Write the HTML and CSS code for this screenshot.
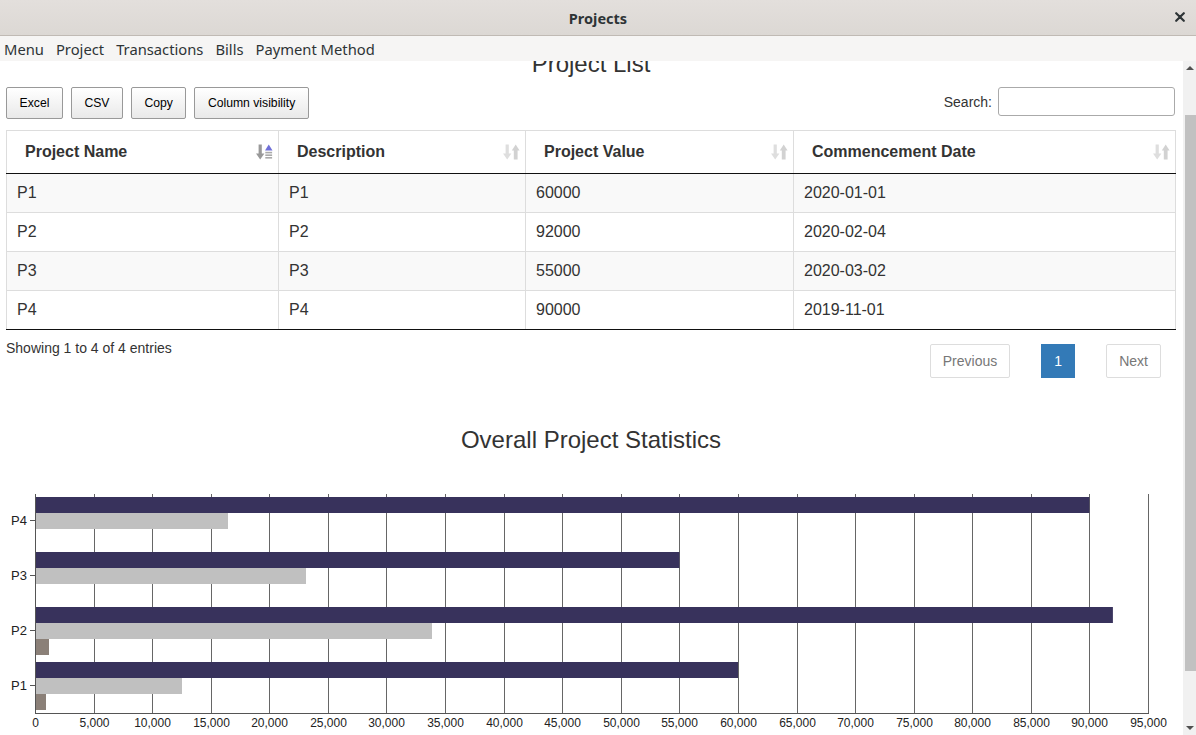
FILE: index.html
```html
<!DOCTYPE html>
<html>
<head>
<meta charset="utf-8">
<title>Projects</title>
<link rel="stylesheet" href="styles.css">
</head>
<body>
<div class="titlebar">
  <span class="title">Projects</span>
  <svg class="close" width="10" height="10" viewBox="0 0 10 10"><path d="M1.2 1.2 L8.8 8.8 M8.8 1.2 L1.2 8.8" stroke="#2e3436" stroke-width="2.2" stroke-linecap="round"/></svg>
</div>
<div class="menubar">
  <span>Menu</span><span>Project</span><span>Transactions</span><span>Bills</span><span>Payment Method</span>
</div>
<div class="content">
  <div class="main">
    <h2 class="heading">Project List</h2>
    <div class="toolbar">
      <div class="buttons">
        <button class="btn">Excel</button>
        <button class="btn">CSV</button>
        <button class="btn">Copy</button>
        <button class="btn">Column visibility</button>
      </div>
      <label class="search">Search: <input type="text" class="search-input"></label>
    </div>
    <table class="grid">
      <colgroup><col class="c1"><col class="c2"><col class="c3"><col class="c4"></colgroup>
      <thead>
        <tr>
          <th><div class="th-inner"><span>Project Name</span>
            <svg class="sort" width="19" height="18" viewBox="0 0 19 18"><rect x="3.6" y="1.5" width="3.2" height="10" fill="#999"/><polygon points="1,10.5 9.4,10.5 5.2,16.5" fill="#999"/><polygon points="10,7.5 17.5,7.5 13.75,1.5" fill="#6f6fd8"/><rect x="10.3" y="8.8" width="6.8" height="1.6" fill="#aaa"/><rect x="10.3" y="11.4" width="6.8" height="1.6" fill="#aaa"/><rect x="10.3" y="14" width="6.8" height="1.6" fill="#aaa"/></svg></div></th>
          <th><div class="th-inner"><span>Description</span>
            <svg class="sort" width="19" height="18" viewBox="0 0 19 18"><rect x="3.6" y="1.5" width="3.2" height="10" fill="#dedede"/><polygon points="1,10.5 9.4,10.5 5.2,16.5" fill="#dedede"/><polygon points="9.8,7.5 17.6,7.5 13.7,1.5" fill="#d2d2d2"/><rect x="11.8" y="6.5" width="3.8" height="10" fill="#d2d2d2"/></svg></div></th>
          <th><div class="th-inner"><span>Project Value</span>
            <svg class="sort" width="19" height="18" viewBox="0 0 19 18"><rect x="3.6" y="1.5" width="3.2" height="10" fill="#dedede"/><polygon points="1,10.5 9.4,10.5 5.2,16.5" fill="#dedede"/><polygon points="9.8,7.5 17.6,7.5 13.7,1.5" fill="#d2d2d2"/><rect x="11.8" y="6.5" width="3.8" height="10" fill="#d2d2d2"/></svg></div></th>
          <th><div class="th-inner"><span>Commencement Date</span>
            <svg class="sort" width="19" height="18" viewBox="0 0 19 18"><rect x="3.6" y="1.5" width="3.2" height="10" fill="#dedede"/><polygon points="1,10.5 9.4,10.5 5.2,16.5" fill="#dedede"/><polygon points="9.8,7.5 17.6,7.5 13.7,1.5" fill="#d2d2d2"/><rect x="11.8" y="6.5" width="3.8" height="10" fill="#d2d2d2"/></svg></div></th>
        </tr>
      </thead>
      <tbody>
        <tr class="odd"><td>P1</td><td>P1</td><td>60000</td><td>2020-01-01</td></tr>
        <tr><td>P2</td><td>P2</td><td>92000</td><td>2020-02-04</td></tr>
        <tr class="odd"><td>P3</td><td>P3</td><td>55000</td><td>2020-03-02</td></tr>
        <tr><td>P4</td><td>P4</td><td>90000</td><td>2019-11-01</td></tr>
      </tbody>
    </table>
    <div class="footer">
      <div class="info">Showing 1 to 4 of 4 entries</div>
      <div class="pager">
        <span class="pg disabled">Previous</span>
        <span class="pg current">1</span>
        <span class="pg disabled">Next</span>
      </div>
    </div>
    <h2 class="chart-title">Overall Project Statistics</h2>
    <svg class="chart" width="1170" height="270" viewBox="0 0 1170 270">
      <g stroke="#666" stroke-width="1">
        <line x1="88.5" y1="24" x2="88.5" y2="243"/>
        <line x1="146.5" y1="24" x2="146.5" y2="243"/>
        <line x1="205.5" y1="24" x2="205.5" y2="243"/>
        <line x1="263.5" y1="24" x2="263.5" y2="243"/>
        <line x1="322.5" y1="24" x2="322.5" y2="243"/>
        <line x1="380.5" y1="24" x2="380.5" y2="243"/>
        <line x1="439.5" y1="24" x2="439.5" y2="243"/>
        <line x1="498.5" y1="24" x2="498.5" y2="243"/>
        <line x1="556.5" y1="24" x2="556.5" y2="243"/>
        <line x1="615.5" y1="24" x2="615.5" y2="243"/>
        <line x1="673.5" y1="24" x2="673.5" y2="243"/>
        <line x1="732.5" y1="24" x2="732.5" y2="243"/>
        <line x1="791.5" y1="24" x2="791.5" y2="243"/>
        <line x1="849.5" y1="24" x2="849.5" y2="243"/>
        <line x1="908.5" y1="24" x2="908.5" y2="243"/>
        <line x1="966.5" y1="24" x2="966.5" y2="243"/>
        <line x1="1025.5" y1="24" x2="1025.5" y2="243"/>
        <line x1="1083.5" y1="24" x2="1083.5" y2="243"/>
        <line x1="1142.5" y1="24" x2="1142.5" y2="243"/>
      </g>
      <g>
        <rect x="29" y="27" width="1054.4" height="16" fill="#38325c"/>
        <rect x="29" y="43" width="193" height="16" fill="#c0c0c0"/>
        <rect x="29" y="82" width="644.4" height="16" fill="#38325c"/>
        <rect x="29" y="98" width="271" height="16" fill="#c0c0c0"/>
        <rect x="29" y="137" width="1077.9" height="16" fill="#38325c"/>
        <rect x="29" y="153" width="397" height="16" fill="#c0c0c0"/>
        <rect x="29" y="169" width="14" height="16" fill="#8b8078"/>
        <rect x="29" y="192" width="703" height="16" fill="#38325c"/>
        <rect x="29" y="208" width="147" height="16" fill="#c0c0c0"/>
        <rect x="29" y="224" width="11" height="16" fill="#8b8078"/>
      </g>
      <g stroke="#555" stroke-width="1">
        <line x1="29.5" y1="24" x2="29.5" y2="243.5"/>
        <line x1="29" y1="243.5" x2="1143" y2="243.5"/>
        <line x1="24" y1="50.5" x2="29" y2="50.5"/>
        <line x1="24" y1="105.5" x2="29" y2="105.5"/>
        <line x1="24" y1="160.5" x2="29" y2="160.5"/>
        <line x1="24" y1="215.5" x2="29" y2="215.5"/>
      </g>
      <g class="ylab" text-anchor="end">
        <text x="21" y="55">P4</text>
        <text x="21" y="110">P3</text>
        <text x="21" y="165">P2</text>
        <text x="21" y="220">P1</text>
      </g>
      <g class="xlab" text-anchor="middle">
        <text x="29.5" y="257">0</text>
        <text x="88.5" y="257">5,000</text>
        <text x="146.5" y="257">10,000</text>
        <text x="205.5" y="257">15,000</text>
        <text x="263.5" y="257">20,000</text>
        <text x="322.5" y="257">25,000</text>
        <text x="380.5" y="257">30,000</text>
        <text x="439.5" y="257">35,000</text>
        <text x="498.5" y="257">40,000</text>
        <text x="556.5" y="257">45,000</text>
        <text x="615.5" y="257">50,000</text>
        <text x="673.5" y="257">55,000</text>
        <text x="732.5" y="257">60,000</text>
        <text x="791.5" y="257">65,000</text>
        <text x="849.5" y="257">70,000</text>
        <text x="908.5" y="257">75,000</text>
        <text x="966.5" y="257">80,000</text>
        <text x="1025.5" y="257">85,000</text>
        <text x="1083.5" y="257">90,000</text>
        <text x="1142.5" y="257">95,000</text>
      </g>
    </svg>
  </div>
  <div class="scrollbar">
    <div class="arrow up"></div>
    <div class="track"><div class="thumb"></div></div>
    <div class="arrow down"></div>
  </div>
</div>
</body>
</html>
```

FILE: styles.css
```css
* { box-sizing: border-box; }
html, body { margin: 0; padding: 0; }
body {
  width: 1196px;
  height: 735px;
  overflow: hidden;
  background: #fff;
  font-family: "Liberation Sans", Arial, sans-serif;
  color: #333;
}
.titlebar {
  height: 36px;
  background: linear-gradient(#e3dfdc, #dcd8d4);
  border-bottom: 1px solid #c0bab4;
  display: flex;
  align-items: center;
  justify-content: center;
  position: relative;
}
.title {
  font-family: "Noto Sans", sans-serif;
  font-weight: bold;
  font-size: 14.5px;
  color: #2e3436;
}
.close {
  position: absolute;
  right: 11px;
  top: 12px;
}
.menubar {
  height: 25px;
  background: #f6f5f4;
  display: flex;
  align-items: center;
  gap: 12px;
  padding-left: 4px;
  font-family: "Noto Sans", sans-serif;
  font-size: 14.75px;
  color: #2e3436;
}
.content {
  display: flex;
  height: 674px;
}
.main {
  width: 1183px;
  height: 674px;
  overflow: hidden;
  padding: 0 7px 0 6px;
}
.heading {
  margin: -10px 0 0;
  text-align: center;
  font-weight: normal;
  font-size: 24px;
  line-height: 26px;
  color: #333;
}
.toolbar {
  margin-top: 10px;
  display: flex;
  justify-content: space-between;
  align-items: flex-start;
}
.buttons { display: flex; gap: 7.8px; }
.btn {
  height: 32px;
  padding: 0 12.6px;
  font-family: "Liberation Sans", Arial, sans-serif;
  font-size: 12.2px;
  color: #000;
  background: linear-gradient(#ffffff, #e9e9e9);
  border: 1px solid #999;
  border-radius: 2px;
}
.search {
  display: flex;
  align-items: center;
  gap: 6px;
  font-size: 14px;
  color: #333;
  height: 29px;
  margin-right: 1px;
}
.search-input {
  width: 177px;
  height: 29px;
  border: 1px solid #aaa;
  border-radius: 3px;
  background: #fff;
}
.grid {
  margin-top: 11px;
  width: 1169px;
  border-collapse: collapse;
  table-layout: fixed;
  font-size: 16px;
}
.c1 { width: 272px; }
.c2 { width: 247px; }
.c3 { width: 268px; }
.c4 { width: 382px; }
.grid th {
  text-align: left;
  font-weight: bold;
  padding: 10px 4px 10px 18px;
  line-height: 22px;
  border: 1px solid #ddd;
  border-bottom: 1px solid #111;
}
.th-inner {
  display: flex;
  justify-content: space-between;
  align-items: center;
}
.sort { display: block; }
.grid td {
  padding: 8px 10px;
  line-height: 22px;
  border: 1px solid #ddd;
}
.grid tr.odd td { background: #f9f9f9; }
.grid tbody tr:last-child td { border-bottom: 1px solid #111; }
.footer {
  display: flex;
  justify-content: space-between;
  align-items: flex-start;
}
.info {
  padding-top: 8px;
  font-size: 14px;
  line-height: 20px;
}
.pager {
  margin-top: 14px;
  margin-right: 15px;
  display: flex;
  gap: 31px;
}
.pg {
  height: 34px;
  display: flex;
  align-items: center;
  justify-content: center;
  font-size: 14px;
  color: #777;
  border: 1px solid #ddd;
  border-radius: 2px;
  padding: 0 12px;
}
.pg.current {
  width: 34px;
  padding: 0;
  background: #337ab7;
  border-color: #337ab7;
  color: #fff;
  border-radius: 0;
}
.chart-title {
  margin: 48px 0 0;
  text-align: center;
  font-weight: normal;
  font-size: 24px;
  line-height: 28px;
  color: #333;
}
.chart {
  display: block;
  margin-top: 16px;
}
.xlab text {
  font-family: "Liberation Sans", Arial, sans-serif;
  font-size: 12px;
  fill: #222;
}
.ylab text {
  font-family: "Liberation Sans", Arial, sans-serif;
  font-size: 13px;
  fill: #222;
}
.scrollbar {
  width: 13px;
  height: 674px;
  background: #f1f1f1;
  display: flex;
  flex-direction: column;
}
.arrow { height: 14px; display: flex; justify-content: center; align-items: center; }
.arrow::before {
  content: "";
  border-left: 4px solid transparent;
  border-right: 4px solid transparent;
}
.arrow.up::before { border-bottom: 4px solid #505050; }
.arrow.down::before { border-top: 4px solid #505050; }
.track { flex: 1; padding: 40px 0 50px 2px; }
.thumb { height: 100%; background: #c1c1c1; }
```
